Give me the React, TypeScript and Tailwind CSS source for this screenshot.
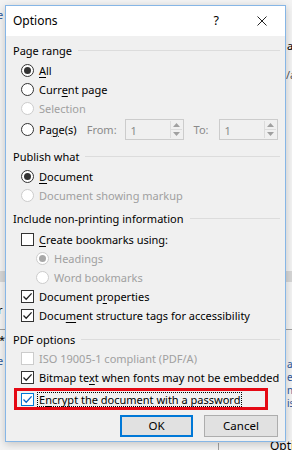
import React from "react";

type Lbl = { pre?: string; u?: string; post?: string };

const Label: React.FC<Lbl> = ({ pre = "", u = "", post = "" }) => (
  <span className="whitespace-nowrap">
    {pre}
    {u && <span className="underline underline-offset-[2px] decoration-1">{u}</span>}
    {post}
  </span>
);

const Radio: React.FC<{ checked?: boolean; disabled?: boolean }> = ({ checked, disabled }) => (
  <span
    className={`flex h-[13px] w-[13px] shrink-0 items-center justify-center rounded-full border bg-white ${
      disabled ? "border-[#cccccc]" : "border-[#333333]"
    }`}
  >
    {checked && (
      <span className={`h-[7px] w-[7px] rounded-full ${disabled ? "bg-[#a8a8a8]" : "bg-[#333333]"}`} />
    )}
  </span>
);

const Check: React.FC<{ checked?: boolean; disabled?: boolean; focus?: boolean }> = ({ checked, disabled, focus }) => (
  <span
    className={`flex h-[13px] w-[13px] shrink-0 items-center justify-center border bg-white ${
      focus ? "border-[#0078d7]" : disabled ? "border-[#cccccc]" : "border-[#333333]"
    }`}
  >
    {checked && (
      <svg width="11" height="11" viewBox="0 0 11 11">
        <path
          d="M1.5 5.5 L4.2 8.3 L9.6 2.4"
          fill="none"
          stroke={focus ? "#0a64c8" : "#222222"}
          strokeWidth="1.3"
        />
      </svg>
    )}
  </span>
);

const Header: React.FC<{ text: string; mt: string }> = ({ text, mt }) => (
  <div className={`flex h-[18px] items-center pl-[7px] pr-[5px] ${mt}`}>
    <span className="whitespace-nowrap text-black">{text}</span>
    <span className="ml-[6px] h-px flex-1 bg-[#dcdcdc]" />
  </div>
);

const Row: React.FC<{ children: React.ReactNode; indent?: string; disabled?: boolean; h?: string }> = ({
  children,
  indent = "pl-[15px]",
  disabled,
  h = "h-[19px]",
}) => (
  <div className={`flex ${h} items-center gap-[5px] ${indent} ${disabled ? "text-[#a0a0a0]" : "text-black"}`}>
    {children}
  </div>
);

const Spin: React.FC = () => (
  <div className="flex h-[21px] w-[59px] items-stretch border border-[#cccccc] bg-[#f0f0f0]">
    <span className="flex flex-1 items-center pl-[5px] pt-[2px] text-[#8a8a8a]">1</span>
    <div className="my-px mr-px flex w-[12px] flex-col border-l border-[#dcdcdc]">
      <span className="flex flex-1 items-center justify-center">
        <svg width="7" height="4" viewBox="0 0 7 4">
          <path d="M0 4 L3.5 0 L7 4 Z" fill="#a0a0a0" />
        </svg>
      </span>
      <span className="h-px bg-[#dcdcdc]" />
      <span className="flex flex-1 items-center justify-center">
        <svg width="7" height="4" viewBox="0 0 7 4">
          <path d="M0 0 L3.5 4 L7 0 Z" fill="#a0a0a0" />
        </svg>
      </span>
    </div>
  </div>
);

export default function App() {
  return (
    <div className="relative h-[450px] w-[292px] overflow-hidden bg-[#f3f3f3] font-['Noto_Sans',sans-serif] text-[11px] leading-none">
      {/* document behind the dialog */}
      <span className="absolute left-[-3px] top-[9px] text-[#2b579a]">e</span>
      <div className="absolute left-0 top-[271px] h-[11px] w-full bg-[#d6d6d6]" />
      <span className="absolute left-[-2px] top-[304px] text-black">r</span>
      <div className="absolute left-0 top-[329px] h-px w-full bg-[#a0a0a0]" />
      <span className="absolute left-[-1px] top-[334px] text-black">*.</span>
      <span className="absolute left-[-3px] top-[355px] text-[#2b579a]">e</span>
      <span className="absolute left-[287px] top-[40px] text-black">a</span>
      <span className="absolute left-[286px] top-[69px] text-[#555555]">/a</span>
      <span className="absolute left-[287px] top-[359px] text-[10px] text-[#2b579a]">a</span>
      <span className="absolute left-[287px] top-[372px] text-[10px] text-[#2b579a]">e</span>
      <span className="absolute left-[287px] top-[385px] text-[10px] text-[#2b579a]">n</span>
      <span className="absolute left-[287px] top-[398px] text-[10px] text-[#2b579a]">is</span>
      <div className="absolute left-[218px] top-[443px] h-[7px] w-px bg-[#a0a0a0]" />
      <span className="absolute left-[270px] top-[440px] text-[12px] text-black">Opti</span>

      {/* dialog window */}
      <div className="absolute left-[5px] top-[5px] flex h-[437px] w-[281px] flex-col border border-[#86b6e6] bg-[#f0f0f0] shadow-[0_2px_8px_rgba(0,0,0,0.2)]">
        <div className="flex h-[30px] items-center bg-white pl-[7px]">
          <span className="text-[12px] text-black">Options</span>
          <span className="ml-auto mr-[38px] text-[12.5px] text-black">?</span>
          <svg className="mr-[18px]" width="10" height="10" viewBox="0 0 10 10">
            <path d="M0.5 0.5 L9.5 9.5 M9.5 0.5 L0.5 9.5" stroke="#222222" strokeWidth="1" />
          </svg>
        </div>

        <Header text="Page range" mt="mt-[5px]" />
        <div className="mt-[2px]">
          <Row>
            <Radio checked />
            <Label u="A" post="ll" />
          </Row>
          <Row>
            <Radio />
            <Label pre="Curr" u="e" post="nt page" />
          </Row>
          <Row disabled>
            <Radio disabled />
            <Label pre="Selection" />
          </Row>
          <Row h="h-[22px]">
            <Radio />
            <Label pre="Pa" u="g" post="e(s)" />
            <span className="ml-[5px] text-[#8a8a8a]">From:</span>
            <span className="ml-[3px]">
              <Spin />
            </span>
            <span className="ml-[5px] text-[#8a8a8a]">To:</span>
            <span className="ml-[5px]">
              <Spin />
            </span>
          </Row>
        </div>

        <Header text="Publish what" mt="mt-[7px]" />
        <div className="mt-[2px]">
          <Row>
            <Radio checked />
            <Label u="D" post="ocument" />
          </Row>
          <Row disabled>
            <Radio disabled />
            <Label pre="Document showing markup" />
          </Row>
        </div>

        <Header text="Include non-printing information" mt="mt-[4px]" />
        <div className="mt-[3px]">
          <Row>
            <Check />
            <Label u="C" post="reate bookmarks using:" />
          </Row>
          <Row indent="pl-[30px]" disabled>
            <Radio checked disabled />
            <Label pre="Headings" />
          </Row>
          <Row indent="pl-[30px]" disabled>
            <Radio disabled />
            <Label pre="Word bookmarks" />
          </Row>
          <Row>
            <Check checked />
            <Label pre="Document p" u="r" post="operties" />
          </Row>
          <Row>
            <Check checked />
            <Label pre="Docu" u="m" post="ent structure tags for accessibility" />
          </Row>
        </div>

        <Header text="PDF options" mt="mt-[5px]" />
        <div className="mt-px">
          <Row disabled>
            <Check disabled />
            <Label pre="ISO 19005-1 compliant (PDF/A)" />
          </Row>
          <Row>
            <Check checked />
            <Label pre="Bitmap te" u="x" post="t when fonts may not be embedded" />
          </Row>
        </div>
        <div className="ml-[8px] mt-px flex h-[22px] w-[254px] items-center gap-[3px] border-[3px] border-[#e50914] pl-[4px] text-black">
          <Check checked focus />
          <span className="border border-dotted border-black px-px py-px">
            <Label pre="E" u="n" post="crypt the document with a password" />
          </span>
        </div>

        <div className="mt-[5px] flex justify-end gap-[11px] pr-[7px]">
          <button className="h-[22px] w-[73px] border-2 border-[#0078d7] bg-[#e1e1e1] text-[11.5px] text-black">OK</button>
          <button className="h-[22px] w-[74px] border border-[#adadad] bg-[#e1e1e1] text-[11.5px] text-black">Cancel</button>
        </div>
      </div>
    </div>
  );
}
